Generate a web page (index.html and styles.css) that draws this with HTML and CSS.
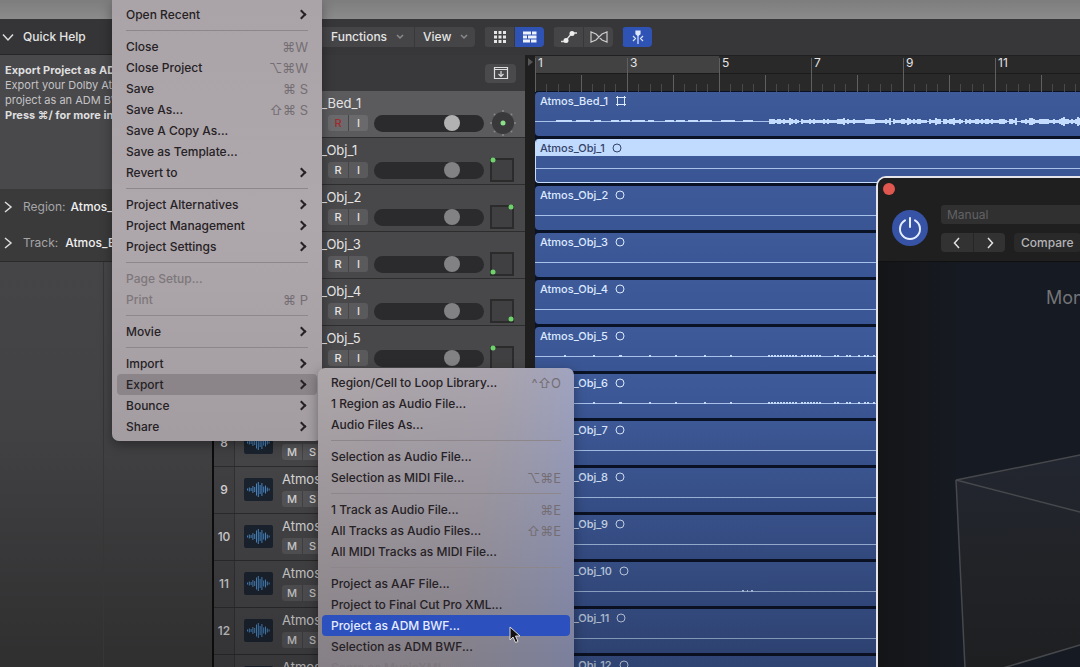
FILE: index.html
```html
<!DOCTYPE html>
<html lang="en">
<head>
<meta charset="utf-8">
<title>Tracks</title>
<link rel="stylesheet" href="styles.css">
</head>
<body>
<div class="titlebar"></div>
<div class="app">
  <aside class="inspector">
    <h2 class="inspector-head"><svg class="chev" viewBox="0 0 12 12"><path d="M1 3.500 6 9l5-5.500"/></svg>Quick Help</h2>
    <div class="help">
      <strong>Export Project as ADM BWF</strong>
      <p>Export your Dolby Atmos</p>
      <p>project as an ADM BWF file.</p>
      <strong>Press ⌘/ for more info.</strong>
    </div>
    <div class="inspector-row"><svg class="chev" viewBox="0 0 12 12"><path d="M3 1l6 5-6 5"/></svg><span>Region:</span><b>Atmos_Bed_1</b></div>
    <div class="inspector-row"><svg class="chev" viewBox="0 0 12 12"><path d="M3 1l6 5-6 5"/></svg><span>Track:</span><b class="wide">Atmos_Bed_1</b></div>
    <div class="strips"><div></div><div></div></div>
  </aside>

  <main class="main">
    <div class="toolbar">
      <div class="group">
        <button class="edit">Edit</button>
        <button class="functions">Functions<svg class="drop" viewBox="0 0 8 6"><path d="M1 1l3 3 3-3"/></svg></button>
        <button class="view">View<svg class="drop" viewBox="0 0 8 6"><path d="M1 1l3 3 3-3"/></svg></button>
      </div>
      <div class="group">
        <button class="tool" aria-label="Grid"><svg width="14" height="14" viewBox="0 0 14 14" fill="#e6e6e6"><path d="M1 1h3v3H1zM5.500 1h3v3h-3zM10 1h3v3h-3zM1 5.500h3v3H1zM5.500 5.500h3v3h-3zM10 5.500h3v3h-3zM1 10h3v3H1zM5.500 10h3v3h-3zM10 10h3v3h-3z"/></svg></button>
        <button class="tool on" aria-label="Tracks"><svg width="16" height="14" viewBox="0 0 16 14" fill="#eef2ff"><path d="M1 1.500h8v3H1zM10 1.500h4.500v3H10zM1 5.500h4v3H1zM6 5.500h8.500v3H6zM1 9.500h7v3H1zM9 9.500h5.500v3H9z"/></svg></button>
      </div>
      <div class="group">
        <button class="tool" aria-label="Automation"><svg width="18" height="14" viewBox="0 0 18 14"><path d="M1 11.500h4L12 3h5" fill="none" stroke="#ddd" stroke-width="1.300"/><circle cx="6" cy="10.500" r="2.500" fill="#eee"/><circle cx="12" cy="3.500" r="2.500" fill="#eee"/></svg></button>
        <button class="tool" aria-label="Flex"><svg width="18" height="14" viewBox="0 0 18 14"><path d="M1 2v10l5-2 6-6 5-2v10l-5-2-6-6z" fill="none" stroke="#ccc" stroke-width="1.200"/></svg></button>
      </div>
      <div class="group">
        <button class="tool on" aria-label="Catch playhead"><svg width="16" height="14" viewBox="0 0 16 14" fill="none" stroke="#dce6ff" stroke-width="1.200"><path d="M8 4v10M3 6l2.500 2.500L3 11M13 6l-2.500 2.500L13 11"/><path d="M6 1h4v3L8 5.500 6 4z" fill="#dce6ff"/></svg></button>
      </div>
    </div>
    <div class="workspace">
      <section class="heads">
        <div class="heads-top"><button class="tool catch" aria-label="Track options"><svg width="16" height="14" viewBox="0 0 16 14" fill="none" stroke="#ddd" stroke-width="1.200"><path d="M1.500 1.500h13v11h-13zM1.500 3.500h13M8 5v5M5.500 8 8 10.500 10.500 8"/></svg></button></div>
        <div id="heads"></div>
      </section>
      <div class="gutter"><svg width="6" height="8" viewBox="0 0 6 8"><path d="M1 0l5 4-5 4z" fill="#555"/></svg></div>
      <section class="lanes">
        <div class="ruler">
          <div class="bars"><span class="lit">1</span><span class="lit">3</span><span>5</span><span>7</span><span>9</span><span>11</span></div>
          <svg class="ticks" width="100%" height="36"><defs><pattern id="t" width="92" height="36" patternUnits="userSpaceOnUse"><path d="M.5 2v34M46.500 19v17" stroke="#606060"/><path d="M11.500 28v8M23.500 28v8M34.500 28v8M57.500 28v8M69.500 28v8M80.500 28v8" stroke="#494949"/></pattern></defs><rect width="100%" height="36" fill="url(#t)"/></svg>
        </div>
        <div id="lanes"></div>
      </section>
    </div>
  </main>
</div>

<section class="plugin">
  <header class="plugin-head">
    <button class="close" aria-label="Close"></button>
    <div class="plugin-bar">
      <button class="power" aria-label="Power"><svg width="26" height="26" viewBox="0 0 26 26" fill="none" stroke="#e4eeff" stroke-width="2" stroke-linecap="round"><path d="M13 3v9M8 5.300a10 10 0 1 0 10 0"/></svg></button>
      <div class="plugin-fields">
        <button class="preset">Manual</button>
        <div class="plugin-row">
          <div class="nav"><button aria-label="Previous"><svg viewBox="0 0 12 12"><path d="M8 1 3.500 6 8 11"/></svg></button><button aria-label="Next"><svg viewBox="0 0 12 12"><path d="M4 1l4.500 5L4 11"/></svg></button></div>
          <button class="compare">Compare</button>
        </div>
      </div>
    </div>
  </header>
  <div class="plugin-body">
    <p>Mon</p>
    <svg class="room" width="202" height="406" viewBox="0 0 202 406"><defs><linearGradient id="g" x2="0" y2="1"><stop offset="0" stop-color="#222630"/><stop offset=".5" stop-color="#212327"/><stop offset="1" stop-color="#1e1f21"/></linearGradient></defs><path d="M78 218 202 193V383L127 406H87z" fill="url(#g)"/><path d="M202 193 78 218 202 250M78 218l9 188M125 406l77-23" fill="none" stroke="#46484c" stroke-width="1.500"/></svg>
  </div>
</section>

<nav class="menu file-menu">
  <button>Open Recent<i></i></button><hr>
  <button>Close<kbd>⌘W</kbd></button>
  <button>Close Project<kbd>⌥⌘W</kbd></button>
  <button>Save<kbd>⌘ S</kbd></button>
  <button>Save As...<kbd>⇧⌘ S</kbd></button>
  <button>Save A Copy As...</button>
  <button>Save as Template...</button>
  <button>Revert to<i></i></button><hr>
  <button>Project Alternatives<i></i></button>
  <button>Project Management<i></i></button>
  <button>Project Settings<i></i></button><hr>
  <button disabled>Page Setup...</button>
  <button disabled>Print<kbd>⌘ P</kbd></button><hr>
  <button>Movie<i></i></button><hr>
  <button>Import<i></i></button>
  <button class="open">Export<i></i></button>
  <button>Bounce<i></i></button>
  <button>Share<i></i></button>
</nav>
<nav class="menu export-menu">
  <button>Region/Cell to Loop Library...<kbd>^⇧O</kbd></button>
  <button>1 Region as Audio File...</button>
  <button>Audio Files As...</button><hr>
  <button>Selection as Audio File...</button>
  <button>Selection as MIDI File...<kbd>⌥⌘E</kbd></button><hr>
  <button>1 Track as Audio File...<kbd>⌘E</kbd></button>
  <button>All Tracks as Audio Files...<kbd>⇧⌘E</kbd></button>
  <button>All MIDI Tracks as MIDI File...</button><hr>
  <button>Project as AAF File...</button>
  <button>Project to Final Cut Pro XML...</button>
  <button class="active">Project as ADM BWF...</button>
  <button>Selection as ADM BWF...</button>
  <button disabled>Score as MusicXML...</button>
</nav>
<svg class="cursor" width="12" height="18" viewBox="0 0 12 18"><path d="M1 1v13l3-3 2.500 5.500 2.500-1L6.500 10H11z" fill="#111" stroke="#ddd"/></svg>
<script src="tracks.js"></script>
</body>
</html>
```
FILE: styles.css
```css
* { box-sizing: border-box; }
body { margin: 0; height: 100vh; overflow: hidden; display: flex; flex-direction: column; position: relative; background: #3a393b; color: #e4e4e4; font: 13px/16px Inter, "DejaVu Sans", sans-serif; }
button { margin: 0; padding: 0; border: 0; background: none; color: inherit; font: inherit; }
h2, p { margin: 0; }
svg { display: block; flex: none; }
.titlebar { flex: none; height: 19px; background: linear-gradient(#7d7d7d, #8b8b8b); }
.app { flex: 1; min-height: 0; display: flex; overflow: hidden; }

.inspector { flex: none; width: 214px; border-right: 2px solid #0c0c0c; display: flex; flex-direction: column; white-space: nowrap; overflow: hidden; }
.inspector-head { height: 36px; display: flex; align-items: center; gap: 9px; padding-left: 2px; font-size: 12px; font-weight: 500; background: #353436; border-bottom: 1px solid #262627; }
.chev { width: 12px; height: 12px; fill: none; stroke: #dcdcdc; stroke-width: 1.5; }
.help { height: 134px; padding: 8px 5px; background: #49484b; font-size: 11px; line-height: 15px; color: #c4c4c6; }
.help strong { display: block; color: #dededf; }
.inspector-row { height: 36px; display: flex; align-items: center; gap: 9px; padding-left: 2px; background: #3a3a3b; font-size: 12px; color: #a5a5a7; }
.inspector-row b { color: #f0f0f0; font-weight: 500; margin-left: -4px; }
.inspector-row .wide { margin-left: -2px; }
.strips { flex: 1; display: grid; grid-template-columns: 104px 1fr; background: linear-gradient(#454446, #424143 40%, #2f2f30); border-top: 1px solid #2a2a2b; }
.strips div:first-child { border-right: 1px solid #363637; }

.main { flex: 1; min-width: 0; display: flex; flex-direction: column; }
.toolbar { flex: none; height: 36px; display: flex; align-items: center; gap: 9px; padding-left: 16px; background: #373638; font-size: 12px; font-weight: 500; }
.group { display: flex; border-radius: 4px; background: #454446; overflow: hidden; }
.group button { height: 20px; display: flex; align-items: center; justify-content: center; border-left: 1px solid #38373a; }
.group .edit { width: 90px; }
.group .functions { width: 94px; justify-content: space-between; padding: 0 10px; }
.group .view { width: 61px; justify-content: space-between; padding: 0 7px 0 8px; }
.drop { width: 8px; height: 6px; fill: none; stroke: #8a8a8c; stroke-width: 1.5; }
.group .tool { width: 30px; }
.group .on { background: #2f53b4; }
.workspace { flex: 1; min-height: 0; display: grid; grid-template-columns: 311px 10px 1fr; }
.heads-top { height: 36px; display: flex; justify-content: flex-end; align-items: center; padding-right: 9px; background: #39383a; }
.catch { width: 31px; height: 19px; display: grid; place-items: center; border-radius: 4px; background: #4a494b; }
.heads { background: #39383a; }
#heads, #lanes { position: relative; }
#heads::after, #lanes::after { content: ""; position: absolute; inset: 0; pointer-events: none; background: linear-gradient(transparent 50%, rgba(10, 10, 14, .3)); }

.head { height: 47px; display: grid; grid-template-columns: 21px 47px 1fr; background: #484749; border-bottom: 1px solid #2d2d2e; }
.head.selected { background: #5b5a5c; }
.head-number { display: grid; place-items: center; font-size: 12px; font-weight: 500; border-right: 1px solid #333; background: #434244; }
.head-icon { width: 29px; height: 23px; margin: 11px 9px; background: #1b2430; border-radius: 2px; }
.head-body { padding-top: 4px; }
.head-name { font-size: 13px; line-height: 16px; }
.head-controls { height: 24px; display: flex; align-items: center; gap: 6px; }
.pair { display: flex; border-radius: 3px; background: #5a595b; overflow: hidden; }
.pair button { width: 20px; height: 16px; font-size: 11px; line-height: 16px; font-weight: 500; }
.pair button + button { border-left: 1px solid #464547; }
.selected .pair { background: #6a696b; }
.selected .rec { color: #a22a2c; }
.volume { appearance: none; width: 110px; height: 17px; margin: 0; border-radius: 9px; background: #2b2a2c; }
.volume::-webkit-slider-thumb { appearance: none; width: 16px; height: 16px; border-radius: 50%; background: #828183; }
.selected .volume::-webkit-slider-thumb { background: #b3b2b3; }
.pan { width: 26px; height: 26px; }

.gutter { background: #1f1f20; padding: 3px 2px; }
.lanes { background: #0a1226; min-width: 0; overflow: hidden; }
.ruler { height: 36px; position: relative; background: #29292a; border-top: 1px solid #202021; }
.bars { height: 18px; display: grid; grid-auto-flow: column; grid-auto-columns: 92px; border-bottom: 1px solid #1b1b1c; font-size: 12px; line-height: 14px; }
.bars span { padding-left: 3px; }
.bars .lit { background: #434243; }
.ticks { position: absolute; inset: 0; }
.lane { height: 47px; padding: 1px 0 2px; }
.region { height: 44px; overflow: hidden; border-radius: 4px 0 0 4px; background: linear-gradient(#3e5a99, #3a5593); color: #dce9ff; }
.region-name { height: 17px; display: flex; align-items: center; gap: 7px; padding-left: 5px; font-size: 11px; line-height: 14px; font-weight: 500; }
.region-name svg { stroke: currentColor; fill: none; }
.region.picked { border: 1px solid #c4dcff; border-top: 0; border-right: 0; }
.picked .region-name { background: #c1dbff; color: #34436a; padding-left: 4px; }
.wave { fill: #c4dcff; }

.plugin { position: absolute; left: 876px; right: -12px; top: 176px; bottom: -12px; border: 2px solid #e6e6ea; border-radius: 10px; background: #15171c; overflow: hidden; display: flex; flex-direction: column; }
.plugin-head { flex: none; height: 84px; padding: 5px 5px 0; background: #1f1f20; border-bottom: 1px solid #101011; }
.close { display: block; width: 12px; height: 12px; border-radius: 50%; background: #e0574f; }
.plugin-bar { display: flex; gap: 13px; padding: 10px 0 0 9px; }
.power { width: 36px; height: 36px; margin-top: 5px; border-radius: 50%; background: #3753a5; display: grid; place-items: center; }
.plugin-fields { flex: 1; display: grid; gap: 9px; white-space: nowrap; }
.preset { height: 19px; padding-left: 6px; border-radius: 3px; background: #303031; color: #626264; text-align: left; font-size: 12px; }
.plugin-row { display: flex; gap: 9px; }
.nav { display: flex; border-radius: 4px; background: #323233; }
.nav button { width: 32px; height: 19px; display: grid; place-items: center; }
.nav button + button { border-left: 1px solid #262627; }
.nav svg { width: 12px; height: 12px; fill: none; stroke: #e2e2e2; stroke-width: 1.5; }
.compare { padding: 0 7px; height: 19px; border-radius: 4px; background: #29292a; color: #b4b4b6; font-size: 12px; font-weight: 500; }
.plugin-body { flex: 1; position: relative; background: linear-gradient(90deg, #141517, #161a22 40%); }
.plugin-body p { padding: 24px 0 0 168px; font-size: 18px; line-height: 24px; color: #737477; }
.room { position: absolute; left: 0; top: 0; }

.menu { position: absolute; display: flex; flex-direction: column; padding: 4px; color: #262125; box-shadow: 0 4px 12px rgba(0, 0, 0, .35); }
.menu button { flex: none; height: 21px; padding: 0 9px; display: flex; align-items: center; justify-content: space-between; border-radius: 4px; text-align: left; white-space: nowrap; font-size: 12px; font-weight: 500; }
.menu button:disabled { color: #7d777b; }
.menu hr { width: calc(100% - 18px); height: 1px; margin: 5px 9px; border: 0; background: #8d878b; }
.menu kbd { font: 13px/16px Inter, "DejaVu Sans", sans-serif; color: #746e74; }
.menu i { width: 7px; height: 7px; margin-right: 3px; border: solid #262125; border-width: 2px 2px 0 0; transform: rotate(45deg); }
.file-menu { left: 112px; top: 0; width: 210px; padding: 4px 5px; border-radius: 0 0 7px 7px; background: linear-gradient(#aaa4a8, #aea7ab 50%, #a39da1); }
.file-menu .open { background: #8b8589; }
.export-menu { left: 318px; top: 368px; width: 256px; border-radius: 7px; background: linear-gradient(transparent, rgba(70, 66, 72, .4)), linear-gradient(100deg, #aea7aa, #a9a4ae 60%, #9aa4cf); }
.export-menu .active { background: #2c50bd; color: #e6ecff; }
.cursor { position: absolute; left: 509px; top: 626px; }
```
FILE: tracks.js
```js
const names = ["Bed_1", ...Array.from({ length: 12 }, (_, i) => "Obj_" + (i + 1))];
const corners = [[4, 4], [22, 4], [4, 22], [22, 22]];

// Pseudo-random amplitude that stays the same between loads.
const noise = x => Math.abs(Math.sin(x * 12.9898) * 43758.5453) % 1;

function bar(x, up, down, width = 1) {
  return `<rect x="${x}" y="${13 - up}" width="${width}" height="${up + down}"/>`;
}

function wave(i) {
  let out = '<rect y="12" width="100%" height="1" opacity=".8"/>';
  if (i === 0) {
    for (const [x, w] of [[21, 16], [41, 14], [59, 7], [76, 8], [86, 9], [97, 13], [113, 6], [130, 9], [141, 9], [153, 10], [165, 12], [186, 14], [208, 10]]) out += bar(x, 2, 0, w);
    for (let x = 234; x < 1400; x += 2) {
      const level = Math.abs(Math.sin(x / 5) * Math.cos(x / 19));
      const h = 1 + Math.round(noise(x) * 2 + level * 2.5 * noise(x + 7));
      out += bar(x, h, h - 1, 2);
    }
  }
  if (i === 5 || i === 6) {
    for (const x of [29, 58, 84, 85, 114, 140, 169, 195]) out += bar(x, 2, 0, 2);
    for (let x = 233; x < 1400; x += 3) if (noise(x) > .35) out += bar(x, 2, 0, 2);
  }
  if (i === 10) out += bar(207, 2, 0, 2) + bar(212, 2, 0) + bar(216, 2, 0, 2);
  return `<svg class="wave" width="100%" height="27">${out}</svg>`;
}

function panner(i) {
  if (i === 0) {
    let dots = "";
    for (let a = 0; a < 8; a++) {
      const t = a * Math.PI / 4;
      dots += `<circle cx="${13 + 12 * Math.sin(t)}" cy="${13 - 12 * Math.cos(t)}" r="1" fill="#888"/>`;
    }
    return `<circle cx="13" cy="13" r="11" fill="#39383a"/>${dots}<circle cx="13" cy="13" r="2.500" fill="#8be08a"/>`;
  }
  const [x, y] = corners[(i - 1) % 4];
  return `<rect x="1" y="2" width="22" height="22" fill="#403f41" stroke="#2b2b2c" stroke-width="2"/><circle cx="${x - 1}" cy="${y - 1}" r="2.500" fill="#6fd36c"/>`;
}

const iconBars = [2, 4, 3, 7, 5, 12, 15, 9, 13, 6, 8, 4, 2]
  .map((h, k) => `<rect x="${3 + k * 1.8}" y="${11.5 - h / 2}" width="1" height="${h}" fill="#4d8fd0"/>`).join("");

document.getElementById("heads").innerHTML = names.map((n, i) => `
  <div class="head${i ? "" : " selected"}">
    <div class="head-number">${i + 1}</div>
    <svg class="head-icon" viewBox="0 0 29 23">${iconBars}</svg>
    <div class="head-body">
      <div class="head-name">Atmos_${n}</div>
      <div class="head-controls">
        <div class="pair"><button>M</button><button>S</button></div>
        <div class="pair"><button class="rec">R</button><button>I</button></div>
        <input class="volume" type="range" value="74" aria-label="Volume Atmos_${n}">
        <svg class="pan" viewBox="0 0 26 26">${panner(i)}</svg>
      </div>
    </div>
  </div>`).join("");

document.getElementById("lanes").innerHTML = names.map((n, i) => `
  <div class="lane"><div class="region${i === 1 ? " picked" : ""}">
    <div class="region-name">Atmos_${n}${i
      ? '<svg width="10" height="10"><circle cx="5" cy="5" r="4"/></svg>'
      : '<svg width="12" height="12"><path d="M2.500 2.500h7v7h-7z"/><path d="M1 2.500h3M8 2.500h3M1 9.500h3M8 9.500h3M2.500 1v3M9.500 1v3M2.500 8v3M9.500 8v3"/></svg>'}</div>
    ${wave(i)}
  </div></div>`).join("");
```
